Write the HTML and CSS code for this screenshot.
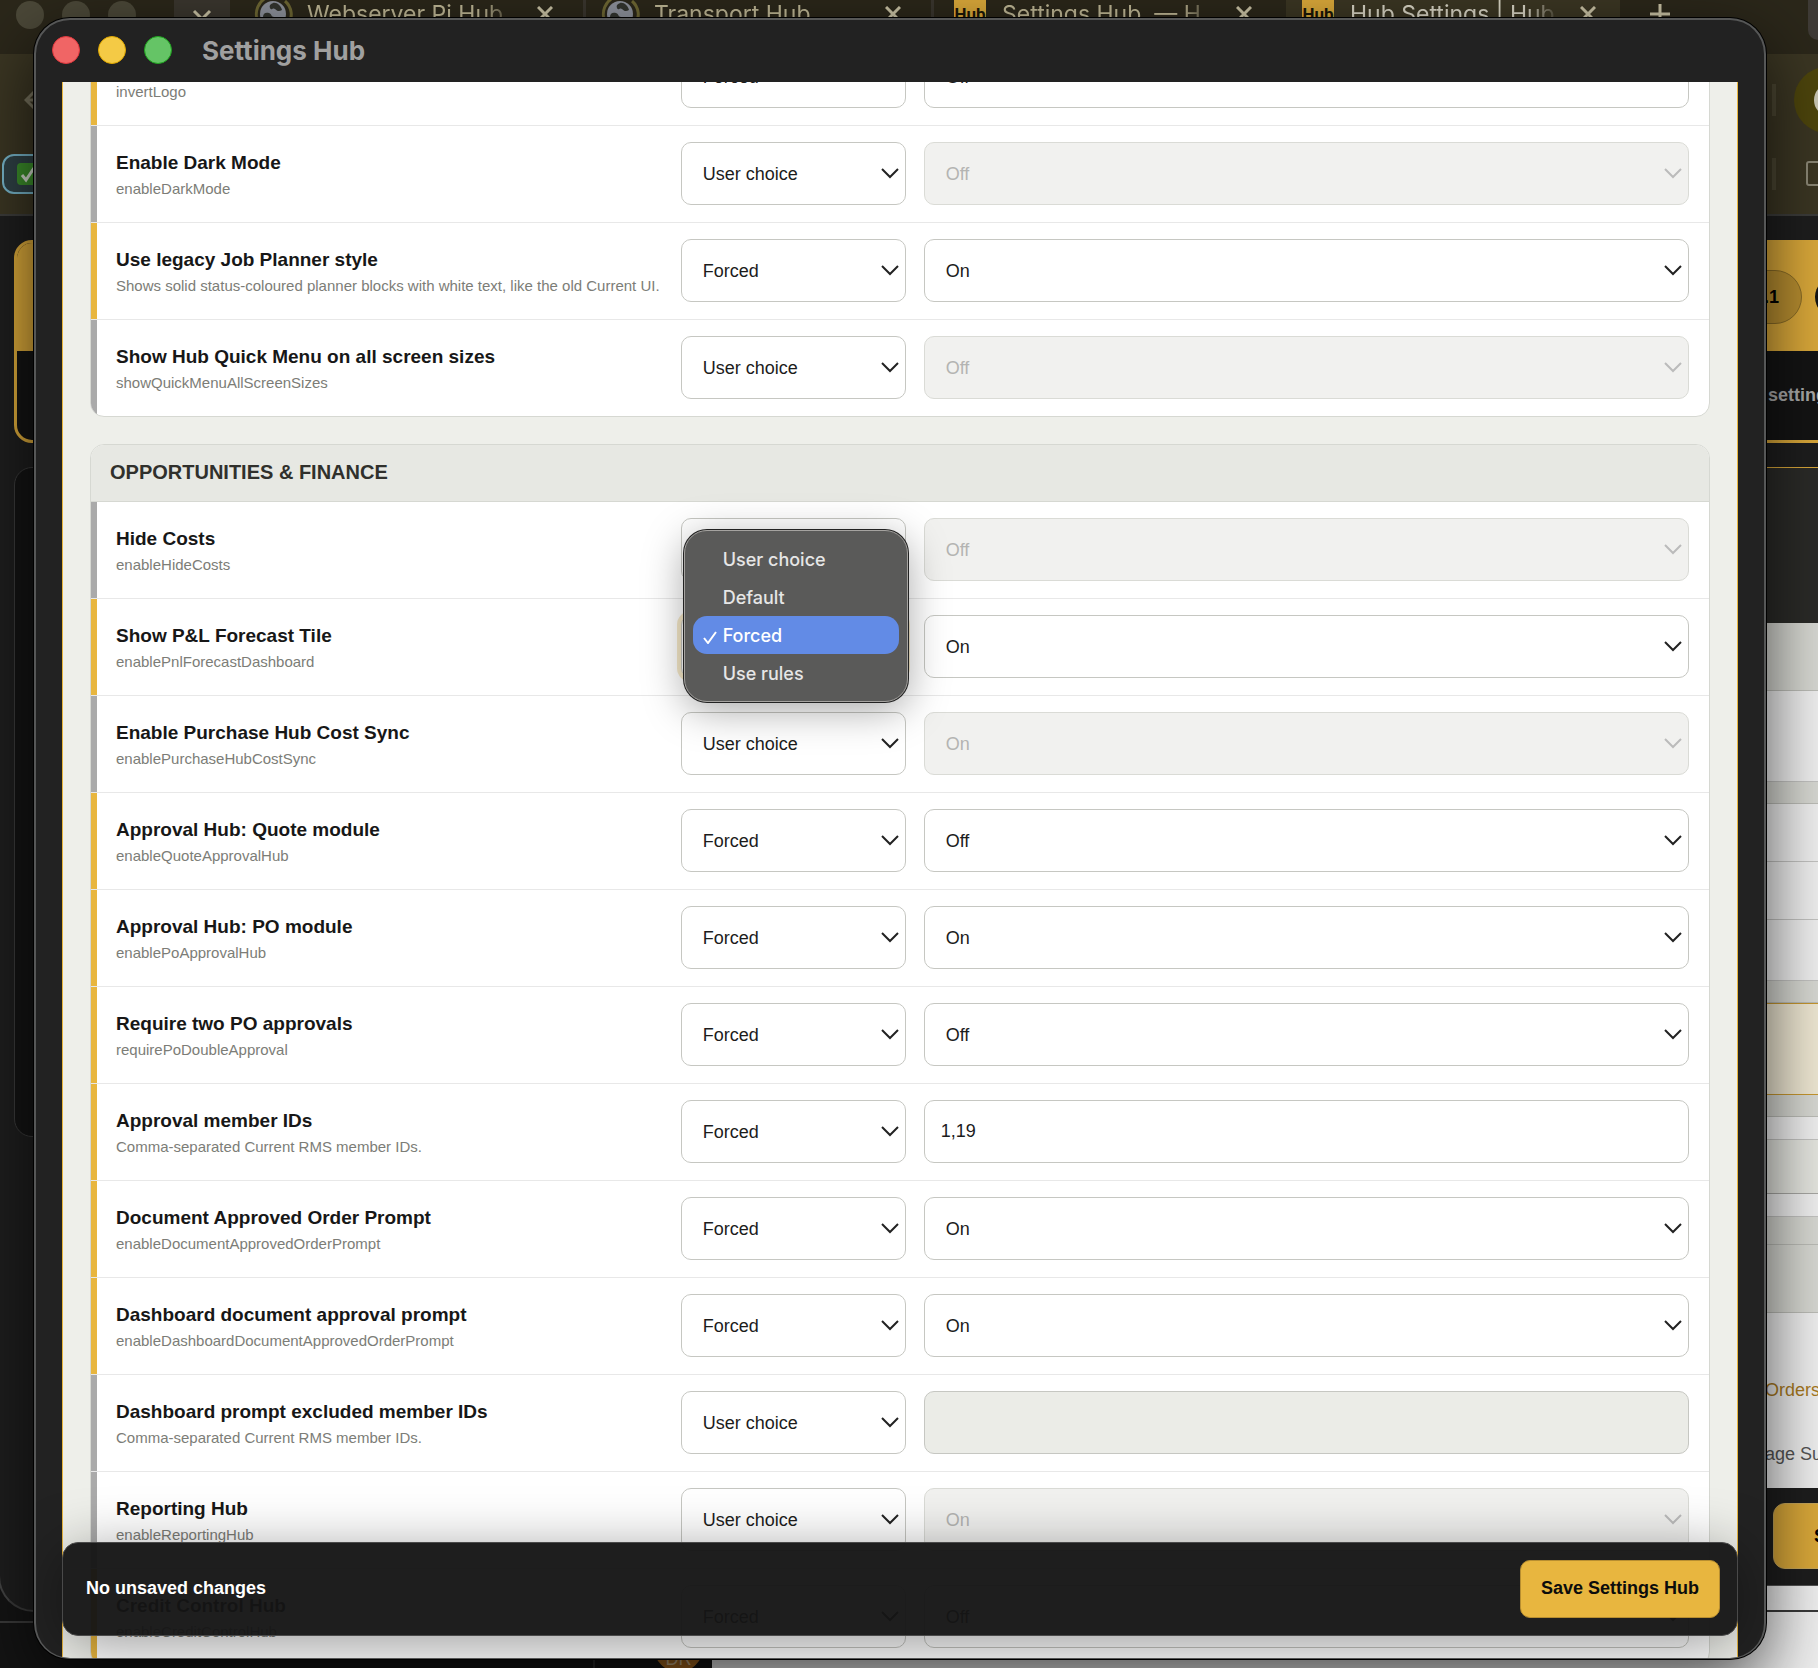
FILE: index.html
```
<!DOCTYPE html>
<html lang="en">
<head>
    <meta charset="UTF-8">
    <meta name="viewport" content="width=device-width, initial-scale=1.0">
    <title>Settings Hub</title>
    <link rel="stylesheet" href="styles.css">
</head>
<body>
    <!-- Window at the very back -->
    <div class="back-window">
        <div class="back-side"></div>
        <div class="back-user"><span class="back-avatar">DR</span></div>
        <div class="back-main"></div>
    </div>

    <!-- Browser -->
    <div class="browser">
        <div class="tabs">
            <div class="tab-lights"><i></i><i></i><i></i></div>
            <button class="tab-search" aria-label="Search tabs"><svg width="20" height="12" viewBox="0 0 20 12"><path d="M2 2l8 8 8-8"/></svg></button>
            <div class="tab tab-first">
                <svg class="globe" width="42" height="42" viewBox="0 0 42 42"><path class="ring" d="M9 33A18 18 0 0 1 21 3M33 8a18 18 0 0 1 3 24"/><circle cx="21" cy="21" r="13"/><path class="land" d="M11 24c0-4 3-5 6-4s2 4 5 4 3 4 1 6-6 1-8-1-4-2-4-5zM21 10c4-1 8 3 9 7-3 2-5 1-7-1s-4 2-5-1 1-4 3-5z"/></svg>
                <span class="tab-name">Webserver Pi Hub</span>
                <button class="tab-close" aria-label="Close tab"><svg width="16" height="16" viewBox="0 0 16 16"><path d="M1 1l14 14M15 1L1 15"/></svg></button>
            </div>
            <div class="tab">
                <svg class="globe" width="42" height="42" viewBox="0 0 42 42"><path class="ring" d="M9 33A18 18 0 0 1 21 3M33 8a18 18 0 0 1 3 24"/><circle cx="21" cy="21" r="13"/><path class="land" d="M11 24c0-4 3-5 6-4s2 4 5 4 3 4 1 6-6 1-8-1-4-2-4-5zM21 10c4-1 8 3 9 7-3 2-5 1-7-1s-4 2-5-1 1-4 3-5z"/></svg>
                <span class="tab-name">Transport Hub</span>
                <button class="tab-close" aria-label="Close tab"><svg width="16" height="16" viewBox="0 0 16 16"><path d="M1 1l14 14M15 1L1 15"/></svg></button>
            </div>
            <div class="tab tab-last">
                <span class="hub-icon">Hub</span>
                <span class="tab-name">Settings Hub &nbsp;— H</span>
                <button class="tab-close" aria-label="Close tab"><svg width="16" height="16" viewBox="0 0 16 16"><path d="M1 1l14 14M15 1L1 15"/></svg></button>
            </div>
            <div class="tab active">
                <span class="hub-icon">Hub</span>
                <span class="tab-name">Hub Settings | Hub</span>
                <button class="tab-close" aria-label="Close tab"><svg width="16" height="16" viewBox="0 0 16 16"><path d="M1 1l14 14M15 1L1 15"/></svg></button>
            </div>
            <button class="tab-new" aria-label="New tab"><svg width="20" height="20" viewBox="0 0 20 20"><path d="M10 0v20M0 10h20"/></svg></button>
            <div class="tab-menu"></div>
        </div>

        <div class="toolbar">
            <div class="toolbar-row">
                <svg class="back-arrow" width="24" height="24" viewBox="0 0 24 24"><path d="M23 12H2M12 2L2 12l10 10"/></svg>
                <div class="toolbar-end"><i class="sep"></i><span class="profile"><i></i></span></div>
            </div>
            <div class="toolbar-row">
                <div class="bookmark"><svg width="22" height="22" viewBox="0 0 22 22"><rect width="22" height="22" rx="4" fill="#3c8f2b"/><path d="M5 12l4 5 8-12" fill="none" stroke="#d5dcd0" stroke-width="3"/></svg></div>
                <div class="toolbar-end"><i class="sep"></i><svg class="folder" width="24" height="26" viewBox="0 0 24 26"><rect x="1" y="1" width="28" height="23" rx="2"/></svg></div>
            </div>
        </div>

        <div class="page">
            <div class="hero">
                <div class="hero-top"><span class="version">v1.1</span><span class="dot"></span></div>
                <div class="hero-bottom"><span>settings</span></div>
            </div>
            <div class="page-body">
                <div class="side-card"></div>
                <div class="rail">
                    <div class="rail-dark"></div>
                    <div class="rail-grey tall"></div>
                    <div class="rail-white big"></div>
                    <div class="rail-grey"></div>
                    <div class="rail-white row"></div>
                    <div class="rail-white row"></div>
                    <div class="rail-white row-last"></div>
                    <div class="rail-grey"></div>
                    <div class="rail-note"></div>
                    <div class="rail-grey"></div>
                    <div class="rail-white thin"></div>
                    <div class="rail-field"></div>
                    <div class="rail-white thin"></div>
                    <div class="rail-grey mid"></div>
                    <div class="rail-grey tall"></div>
                    <div class="rail-text">
                        <a href="#">Orders</a>
                        <span>age Su</span>
                    </div>
                    <div class="rail-save"><button>Save</button></div>
                    <div class="rail-end"></div>
                </div>
            </div>
        </div>
    </div>

    <!-- Settings Hub window -->
    <div class="window">
        <header class="titlebar">
            <div class="lights"><i class="red"></i><i class="yellow"></i><i class="green"></i></div>
            <h1>Settings Hub</h1>
        </header>

        <main class="content">
            <section class="card first">
                <div class="setting forced">
                    <label for="invertLogo">Invert Logo<small>invertLogo</small></label>
                    <select id="invertLogo"><option>Forced</option></select>
                    <select aria-label="Invert Logo value"><option>Off</option></select>
                </div>
                <div class="setting">
                    <label for="enableDarkMode">Enable Dark Mode<small>enableDarkMode</small></label>
                    <select id="enableDarkMode"><option>User choice</option></select>
                    <select aria-label="Enable Dark Mode value" disabled><option>Off</option></select>
                </div>
                <div class="setting forced">
                    <label for="legacyPlanner">Use legacy Job Planner style<small>Shows solid status-coloured planner blocks with white text, like the old Current UI.</small></label>
                    <select id="legacyPlanner"><option>Forced</option></select>
                    <select aria-label="Use legacy Job Planner style value"><option>On</option></select>
                </div>
                <div class="setting">
                    <label for="showQuickMenu">Show Hub Quick Menu on all screen sizes<small>showQuickMenuAllScreenSizes</small></label>
                    <select id="showQuickMenu"><option>User choice</option></select>
                    <select aria-label="Show Hub Quick Menu value" disabled><option>Off</option></select>
                </div>
            </section>

            <section class="card">
                <h2>OPPORTUNITIES &amp; FINANCE</h2>
                <div class="setting">
                    <label for="enableHideCosts">Hide Costs<small>enableHideCosts</small></label>
                    <select id="enableHideCosts"><option>User choice</option></select>
                    <select aria-label="Hide Costs value" disabled><option>Off</option></select>
                </div>
                <div class="setting forced">
                    <label for="enablePnl">Show P&amp;L Forecast Tile<small>enablePnlForecastDashboard</small></label>
                    <div class="open-select">
                        <select id="enablePnl"><option>Forced</option></select>
                        <div class="menu" role="listbox" aria-label="Mode">
                            <button role="option">User choice</button>
                            <button role="option">Default</button>
                            <button role="option" class="selected" aria-selected="true"><svg width="14" height="14" viewBox="0 0 14 14"><path d="M1 8l4 5 8-11"/></svg>Forced</button>
                            <button role="option">Use rules</button>
                        </div>
                    </div>
                    <select aria-label="Show P&amp;L Forecast Tile value"><option>On</option></select>
                </div>
                <div class="setting">
                    <label for="purchaseSync">Enable Purchase Hub Cost Sync<small>enablePurchaseHubCostSync</small></label>
                    <select id="purchaseSync"><option>User choice</option></select>
                    <select aria-label="Enable Purchase Hub Cost Sync value" disabled><option>On</option></select>
                </div>
                <div class="setting forced">
                    <label for="quoteModule">Approval Hub: Quote module<small>enableQuoteApprovalHub</small></label>
                    <select id="quoteModule"><option>Forced</option></select>
                    <select aria-label="Quote module value"><option>Off</option></select>
                </div>
                <div class="setting forced">
                    <label for="poModule">Approval Hub: PO module<small>enablePoApprovalHub</small></label>
                    <select id="poModule"><option>Forced</option></select>
                    <select aria-label="PO module value"><option>On</option></select>
                </div>
                <div class="setting forced">
                    <label for="twoPo">Require two PO approvals<small>requirePoDoubleApproval</small></label>
                    <select id="twoPo"><option>Forced</option></select>
                    <select aria-label="Require two PO approvals value"><option>Off</option></select>
                </div>
                <div class="setting forced">
                    <label for="memberIds">Approval member IDs<small>Comma-separated Current RMS member IDs.</small></label>
                    <select id="memberIds"><option>Forced</option></select>
                    <input type="text" aria-label="Approval member IDs value" value="1,19">
                </div>
                <div class="setting forced">
                    <label for="orderPrompt">Document Approved Order Prompt<small>enableDocumentApprovedOrderPrompt</small></label>
                    <select id="orderPrompt"><option>Forced</option></select>
                    <select aria-label="Document Approved Order Prompt value"><option>On</option></select>
                </div>
                <div class="setting forced">
                    <label for="dashPrompt">Dashboard document approval prompt<small>enableDashboardDocumentApprovedOrderPrompt</small></label>
                    <select id="dashPrompt"><option>Forced</option></select>
                    <select aria-label="Dashboard document approval prompt value"><option>On</option></select>
                </div>
                <div class="setting">
                    <label for="excludedIds">Dashboard prompt excluded member IDs<small>Comma-separated Current RMS member IDs.</small></label>
                    <select id="excludedIds"><option>User choice</option></select>
                    <input type="text" aria-label="Excluded member IDs value" disabled>
                </div>
                <div class="setting">
                    <label for="reportingHub">Reporting Hub<small>enableReportingHub</small></label>
                    <select id="reportingHub"><option>User choice</option></select>
                    <select aria-label="Reporting Hub value" disabled><option>On</option></select>
                </div>
                <div class="setting forced">
                    <label for="creditControl">Credit Control Hub<small>enableCreditControlHub</small></label>
                    <select id="creditControl"><option>Forced</option></select>
                    <select aria-label="Credit Control Hub value"><option>Off</option></select>
                </div>
            </section>
        </main>

        <footer class="savebar">
            <span>No unsaved changes</span>
            <button>Save Settings Hub</button>
        </footer>
    </div>
</body>
</html>
```
FILE: styles.css
```
* {
    box-sizing: border-box;
}
body {
    margin: 0;
    height: 100vh;
    overflow: hidden;
    position: relative;
    background-color: #141414;
    font-family: "Liberation Sans", Arial, sans-serif;
    font-size: 18px;
}
button {
    font-family: inherit;
    font-size: inherit;
    cursor: pointer;
}
svg {
    fill: none;
    display: block;
    flex-shrink: 0;
}

/* back window */
.back-window {
    position: absolute;
    inset: auto 0 0 0;
    height: 47px;
    display: flex;
    border-top: 2px solid #3a3a3a;
    background-color: #141414;
}
.back-side {
    width: 595px;
    border-right: 2px solid #2c2c2c;
}
.back-user {
    width: 117px;
    padding: 0 9px 0 59px;
}
.back-avatar {
    display: block;
    width: 49px;
    height: 49px;
    border-radius: 50%;
    background-color: #a8691f;
    color: #d0b48c;
    line-height: 72px;
    text-align: center;
}
.back-main {
    flex: 1;
    margin-top: -12px;
    background-color: #f0f0f0;
}

/* browser */
.browser {
    position: absolute;
    inset: 0 0 56px -2px;
    display: flex;
    flex-direction: column;
    overflow: hidden;
    border-radius: 0 0 0 36px;
    border-left: 2px solid #444;
    border-bottom: 2px solid #3a3a3a;
    background-color: #1e1e1e;
}
.tabs {
    height: 54px;
    display: flex;
    align-items: flex-start;
    background-color: #2b271a;
    color: #bfb795;
    font-family: Inter, sans-serif;
    font-size: 23px;
}
.tabs button {
    border: none;
    background: none;
    padding: 0;
}
.tabs button svg {
    stroke: #c9c2a4;
    stroke-width: 3;
}
.tab-lights {
    display: flex;
    gap: 18px;
    padding: 1px 38px 0 16px;
}
.tab-lights i {
    width: 28px;
    height: 28px;
    border-radius: 50%;
    background-color: #4b4838;
}
.tabs .tab-search {
    width: 56px;
    height: 30px;
    padding: 0 18px;
    border-radius: 0 0 12px 12px;
    background-color: #3a362e;
}
.tab {
    width: 348px;
    height: 28px;
    padding: 0 30px 0 13px;
    display: flex;
    align-items: center;
    border-right: 3px solid #3a362e;
}
.tab-first {
    width: 356px;
    padding-left: 22px;
}
.globe {
    margin-right: 13px;
}
.tab .globe circle {
    fill: #8e929c;
}
.globe .ring {
    stroke: #6e6733;
    stroke-width: 3;
}
.globe .land {
    fill: #33352f;
}
.tab-name {
    flex: 1;
    white-space: nowrap;
    overflow: hidden;
    -webkit-mask-image: linear-gradient(90deg, #000 84%, transparent);
    mask-image: linear-gradient(90deg, #000 84%, transparent);
}
.tab-close {
    width: 16px;
    margin-left: 20px;
}
.tab-last {
    padding-left: 20px;
    border-right: none;
}
.hub-icon {
    width: 32px;
    height: 32px;
    margin-right: 16px;
    background-color: #dba93a;
    color: #1b1708;
    font-family: Roboto, sans-serif;
    font-size: 17px;
    font-weight: bold;
    line-height: 32px;
    text-align: center;
}
.tab.active {
    width: 334px;
    height: 54px;
    margin-left: 4px;
    padding: 0 24px 26px 16px;
    border: none;
    background-color: #3b3623;
    color: #d8d4c4;
}
.tab-new {
    margin: 4px 0 0 30px;
}
.tab-menu {
    width: 10px;
    height: 40px;
    margin-left: auto;
    border-radius: 0 0 0 10px;
    background-color: #3f3b36;
}
.toolbar {
    height: 162px;
    padding: 9px 0;
    border-bottom: 2px solid #3c3c3a;
    background-color: #3b3623;
}
.toolbar-row {
    height: 74px;
    display: flex;
    align-items: center;
    justify-content: space-between;
}
.back-arrow {
    margin-left: 24px;
    stroke: #77725d;
    stroke-width: 3;
}
.toolbar-end {
    width: 46px;
    display: flex;
    align-items: center;
    gap: 18px;
    overflow: hidden;
}
.sep {
    width: 4px;
    height: 32px;
    flex-shrink: 0;
    background-color: #4b4632;
}
.profile {
    width: 66px;
    height: 66px;
    flex-shrink: 0;
    padding: 18px 20px;
    border-radius: 50%;
    background-color: #4d450c;
}
.profile i {
    display: block;
    height: 30px;
    border-radius: 50%;
    background-color: #c9c6b4;
}
.bookmark {
    width: 120px;
    height: 40px;
    margin-left: 2px;
    padding: 7px 13px;
    border: 2px solid #76b4c8;
    border-radius: 12px;
    background-color: #2f4145;
}
.folder {
    margin-left: 12px;
    stroke: #8a8675;
    stroke-width: 2;
}
.page {
    flex: 1;
    padding: 24px 0 0 14px;
}
.hero {
    height: 203px;
    margin-right: -40px;
    border: 3px solid #dba93a;
    border-radius: 18px;
    background-color: #141414;
    overflow: hidden;
}
.hero-top {
    height: 108px;
    display: flex;
    align-items: center;
    justify-content: flex-end;
    gap: 13px;
    background-color: #dba93a;
}
.version {
    height: 54px;
    padding: 0 22px;
    border: 1px solid #8a6c25;
    border-radius: 27px;
    background-color: #b88e30;
    font-weight: bold;
    line-height: 52px;
}
.dot {
    width: 40px;
    height: 40px;
    border-radius: 50%;
    background-color: #141414;
}
.hero-bottom {
    padding: 34px 18px 0 0;
    color: #aaa;
    font-weight: bold;
    text-align: right;
}
.page-body {
    display: flex;
    justify-content: space-between;
    margin-top: 24px;
}
.side-card {
    width: 300px;
    height: 670px;
    border: 1px solid #3a3a3a;
    border-radius: 18px;
    background-color: #141414;
}
.rail {
    width: 56px;
    background-color: #d9dad4;
}
.rail-dark {
    height: 156px;
    border-top: 1px solid #dba93a;
    background-color: #2b2b28;
}
.rail-grey {
    height: 22px;
    border-bottom: 1px solid #bdbeb8;
}
.rail-grey.mid {
    height: 28px;
}
.rail-grey.tall {
    height: 68px;
}
.rail-white {
    height: 58px;
    border-bottom: 1px solid #c4c4c2;
    background-color: #f1f1f1;
}
.rail-white.big {
    height: 91px;
}
.rail-white.row-last {
    height: 61px;
}
.rail-white.thin {
    height: 23px;
}
.rail-note {
    height: 92px;
    border: 1px solid #c8982f;
    border-width: 1px 0;
    background-color: #f0e9d4;
}
.rail-field {
    height: 54px;
    border-bottom: 1px solid #a8a8a4;
    background-color: #e6e7e1;
}
.rail-text {
    height: 175px;
    padding: 66px 0 0 3px;
    display: flex;
    flex-direction: column;
    gap: 42px;
    background-color: #f1f1f1;
    color: #555;
    line-height: 22px;
    white-space: nowrap;
    overflow: hidden;
}
.rail-text a {
    color: #a97a1e;
    text-decoration: none;
}
.rail-save {
    height: 98px;
    padding: 15px 0 0 11px;
    background-color: #1e1e1e;
    border-bottom: 1px solid #555;
    overflow: hidden;
}
.rail-save button {
    width: 198px;
    height: 66px;
    padding: 0 40px;
    border: 1px solid #c9a85a;
    border-radius: 12px;
    background-color: #dba93a;
    font-weight: bold;
    text-align: left;
}
.rail-end {
    height: 40px;
    background-color: #f1f1f1;
}

/* settings window */
.window {
    position: absolute;
    inset: 18px 52px 9px 34px;
    overflow: hidden;
    border: 2px solid #565757;
    border-bottom-width: 1px;
    border-radius: 36px;
    background-color: #222;
    box-shadow: 0 0 0 1px #000, 0 24px 70px rgba(0, 0, 0, 0.7);
    display: flex;
    flex-direction: column;
}
.titlebar {
    height: 62px;
    flex-shrink: 0;
    padding: 0 16px 2px;
    display: flex;
    align-items: center;
    gap: 30px;
}
.titlebar h1 {
    margin: 0;
    color: #a0a0a0;
    font-family: Inter, sans-serif;
    font-size: 26px;
    font-weight: 700;
}
.lights {
    display: flex;
    gap: 18px;
}
.lights i {
    width: 28px;
    height: 28px;
    border-radius: 50%;
}
.lights .red {
    background-color: #f06565;
    border: 1px solid #e0383e;
}
.lights .yellow {
    background-color: #f4ca45;
    border: 1px solid #e0a800;
}
.lights .green {
    background-color: #65c466;
    border: 1px solid #1fa51f;
}
.content {
    flex: 1;
    min-height: 0;
    overflow: hidden;
    margin: 0 26px;
    padding: 0 27px;
    border: 1px solid #e8b63f;
    border-width: 0 1px;
    background-color: #eeefea;
}
.card {
    margin-bottom: 27px;
    border: 1px solid #d6d8d2;
    border-radius: 14px;
    background-color: #fff;
    overflow: hidden;
}
/* list is scrolled down */
.card.first {
    margin-top: -54px;
}
.card h2 {
    margin: 0;
    padding: 15px 19px 17px;
    border-bottom: 1px solid #d6d8d2;
    background-color: #e7e8e3;
    color: #30302c;
    font-size: 20px;
    line-height: 24px;
}
.setting {
    display: grid;
    grid-template-columns: 5fr 225px 7fr;
    gap: 18px;
    align-items: center;
    padding: 16px 20px 17px 25px;
    border-bottom: 1px solid #e8e8e8;
    box-shadow: inset 6px 0 #aaa;
}
.setting.forced {
    box-shadow: inset 6px 0 #e8b63f;
}
.setting:last-child {
    border-bottom: none;
}
.setting label {
    min-width: 0;
    padding-top: 3px;
    color: #171717;
    font-size: 19px;
    font-weight: bold;
    line-height: 28px;
    white-space: nowrap;
}
.setting small {
    display: block;
    color: #7c7d77;
    font-size: 15px;
    font-weight: normal;
    line-height: 24px;
}
.setting select,
.setting input {
    width: 100%;
    min-width: 0;
    height: 63px;
    padding: 0 30px 0 21px;
    border: 1px solid #c6c7c2;
    border-radius: 10px;
    background-color: #fff;
    color: #1c1c1c;
    font-family: inherit;
    font-size: 18px;
}
.setting select {
    appearance: none;
    background-image: url("data:image/svg+xml,%3Csvg xmlns='http://www.w3.org/2000/svg' width='18' height='12' viewBox='0 0 18 12'%3E%3Cpath d='M1 1l8 8 8-8' fill='none' stroke='%23222' stroke-width='2'/%3E%3C/svg%3E");
    background-repeat: no-repeat;
    background-position: right 6px center;
}
.setting input {
    padding: 0 16px;
}
.setting select:disabled {
    border-color: #dadbd6;
    background-color: #f1f1ef;
    background-image: url("data:image/svg+xml,%3Csvg xmlns='http://www.w3.org/2000/svg' width='18' height='12' viewBox='0 0 18 12'%3E%3Cpath d='M1 1l8 8 8-8' fill='none' stroke='%23bbb' stroke-width='2'/%3E%3C/svg%3E");
    color: #b4b4b2;
    opacity: 1;
}
.setting input:disabled {
    background-color: #ebece7;
}
.open-select {
    position: relative;
}
.open-select select {
    display: block;
    box-shadow: 0 0 0 4px #f5e8c8;
}
.menu {
    position: absolute;
    left: 3px;
    top: -85px;
    z-index: 5;
    width: 224px;
    padding: 9px 8px;
    border: 1px solid #a5a3a0;
    border-radius: 23px;
    background-color: #5a5a59;
    box-shadow: 0 0 0 1px #222, 0 8px 40px rgba(0, 0, 0, 0.35);
    font-family: Inter, sans-serif;
    font-size: 18px;
}
.menu button {
    position: relative;
    display: block;
    width: 100%;
    height: 38px;
    padding: 0 30px;
    border: none;
    border-radius: 14px;
    background: none;
    color: #e6e6e6;
    font-weight: 500;
    text-align: left;
}
.menu .selected {
    background-color: #628be6;
    color: #fff;
}
.menu svg {
    position: absolute;
    left: 10px;
    top: 14px;
    stroke: #fff;
    stroke-width: 2;
}
.savebar {
    position: absolute;
    left: 26px;
    right: 26px;
    bottom: 22px;
    height: 94px;
    padding: 0 17px 0 23px;
    display: flex;
    align-items: center;
    justify-content: space-between;
    border: 1px solid #4a4a4a;
    border-radius: 16px;
    background-color: rgba(21, 21, 21, 0.96);
    box-shadow: 0 10px 60px rgba(0, 0, 0, 0.4);
    color: #fff;
    font-weight: bold;
}
.savebar span {
    padding-bottom: 2px;
}
.savebar button {
    height: 58px;
    padding: 0 20px 2px;
    border: 1px solid #b88e30;
    border-radius: 10px;
    background-color: #e8b63f;
    color: #0c0c0c;
    font-weight: bold;
}
```
